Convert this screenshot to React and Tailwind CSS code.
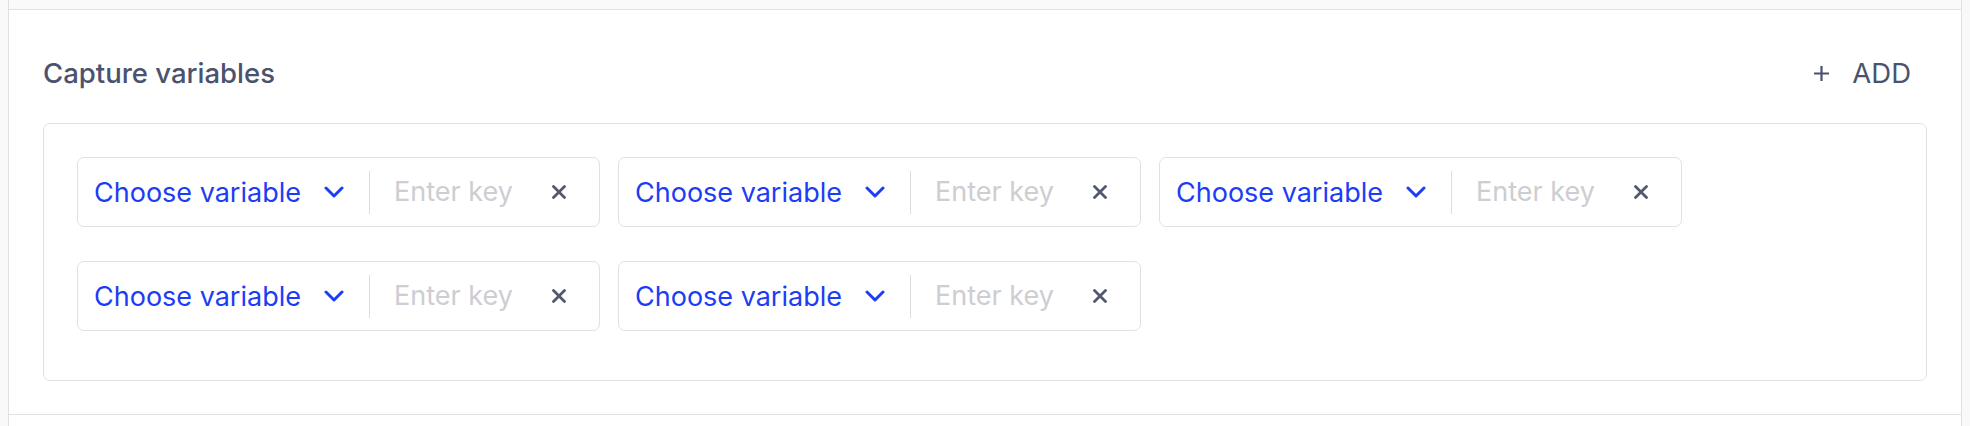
import React from "react";

function Chevron() {
  return (
    <svg width="20" height="12" viewBox="0 0 20 12" fill="none" className="shrink-0">
      <path d="M2 2 L10 10 L18 2" stroke="#1c3cf5" strokeWidth="3" strokeLinecap="round" strokeLinejoin="round" />
    </svg>
  );
}

function Cross() {
  return (
    <svg width="14" height="14" viewBox="0 0 14 14" fill="none" className="shrink-0">
      <path d="M1.5 1.5 L12.5 12.5 M12.5 1.5 L1.5 12.5" stroke="#525870" strokeWidth="2.8" strokeLinecap="round" />
    </svg>
  );
}

function Chip() {
  return (
    <div className="w-[523px] h-[70px] flex items-center pl-[16px] pr-[33px] border border-[#e0e0e7] rounded-[7px] bg-white">
      <button className="flex items-center text-[#1c3cf5] text-[27px] leading-none whitespace-nowrap">
        <span>Choose variable</span>
        <span className="ml-[23px]"><Chevron /></span>
      </button>
      <div className="ml-[25px] w-px h-[43px] bg-[#dcdce2]" />
      <input
        className="ml-[24px] flex-1 min-w-0 bg-transparent outline-none text-[27px] text-[#3a3f55] placeholder:text-[#cdcdd2]"
        placeholder="Enter key"
      />
      <button className="flex items-center justify-center"><Cross /></button>
    </div>
  );
}

export default function App() {
  return (
    <div className="w-[1970px] h-[426px] bg-[#f9f9fa] pl-[8px] pr-[8px]" style={{ fontFamily: "Inter, 'Noto Sans', sans-serif" }}>
      <div className="h-full border-l border-r border-[#e0e0e7] flex flex-col">
        <div className="h-[10px] bg-[#fafafa] border-b border-[#e0e0e7]" />
        <section className="bg-white border-b border-[#e0e0e7] pt-[34px] pb-[33px] px-[34px]">
          <div className="h-[59px] flex items-center justify-between mb-[20px]">
            <h2 className="text-[27.5px] font-medium text-[#4b526e] leading-none">Capture variables</h2>
            <button className="flex items-center gap-[22px] pr-[16px] text-[27.5px] text-[#4b526e] leading-none">
              <svg width="17" height="17" viewBox="0 0 17 17" fill="none">
                <path d="M8.5 1 V16 M1 8.5 H16" stroke="#4b526e" strokeWidth="2.2" />
              </svg>
              <span>ADD</span>
            </button>
          </div>
          <div className="border border-[#e0e0e7] rounded-[7px] pt-[33px] pb-[49px] px-[33px] flex flex-wrap gap-x-[18px] gap-y-[34px]">
            <Chip />
            <Chip />
            <Chip />
            <Chip />
            <Chip />
          </div>
        </section>
        <div className="flex-1 bg-white" />
      </div>
    </div>
  );
}
